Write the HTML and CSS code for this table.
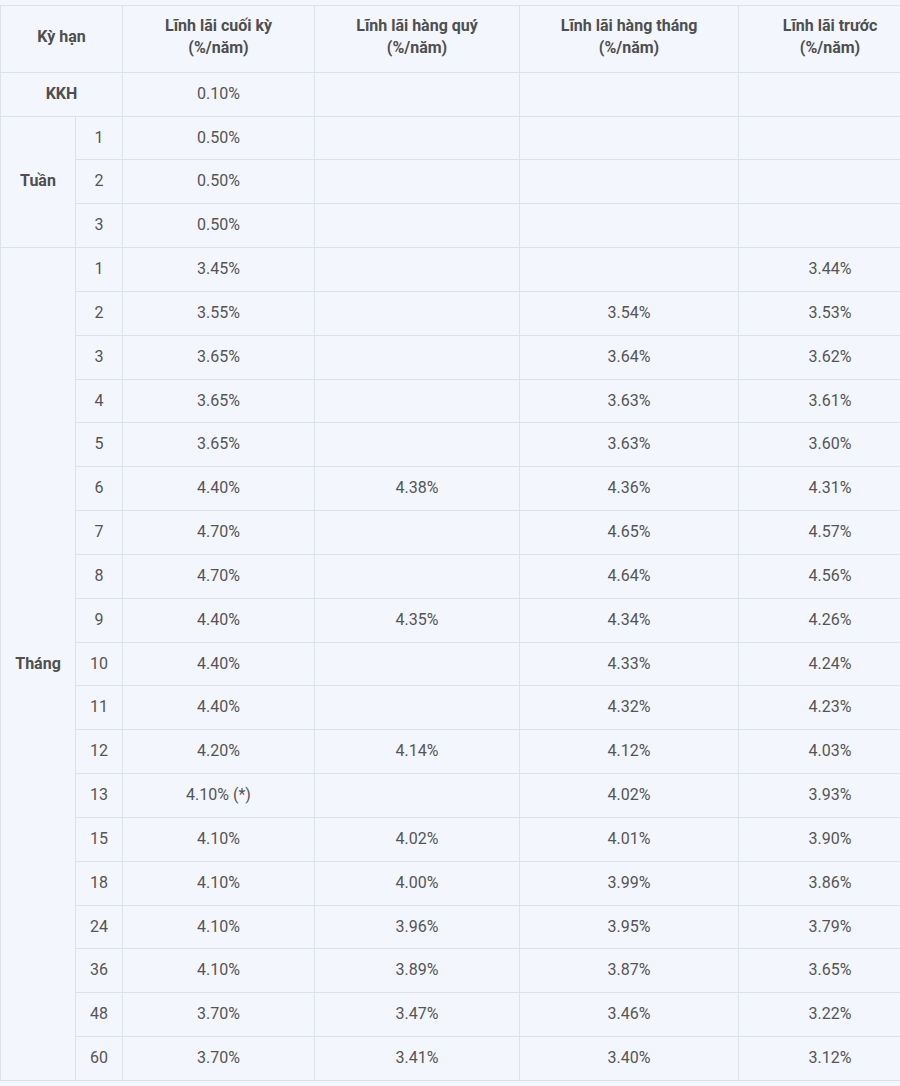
FILE: index.html
```html
<!DOCTYPE html>
<html lang="vi">
<head>
<meta charset="utf-8">
<title>Lãi suất tiền gửi</title>
<link rel="stylesheet" href="styles.css">
</head>
<body>
<div class="wrap">
<table class="rates">
<colgroup>
<col class="c-unit"><col class="c-num"><col class="c-a"><col class="c-b"><col class="c-c"><col class="c-d">
</colgroup>
<thead>
<tr>
<th colspan="2">Kỳ hạn</th>
<th>Lĩnh lãi cuối kỳ<br>(%/năm)</th>
<th>Lĩnh lãi hàng quý<br>(%/năm)</th>
<th>Lĩnh lãi hàng tháng<br>(%/năm)</th>
<th>Lĩnh lãi trước<br>(%/năm)</th>
</tr>
</thead>
<tbody>
<tr><td colspan="2" class="grp">KKH</td><td>0.10%</td><td></td><td></td><td></td></tr>
<tr><td rowspan="3" class="grp">Tuần</td><td>1</td><td>0.50%</td><td></td><td></td><td></td></tr>
<tr><td>2</td><td>0.50%</td><td></td><td></td><td></td></tr>
<tr><td>3</td><td>0.50%</td><td></td><td></td><td></td></tr>
<tr><td rowspan="19" class="grp">Tháng</td><td>1</td><td>3.45%</td><td></td><td></td><td>3.44%</td></tr>
<tr><td>2</td><td>3.55%</td><td></td><td>3.54%</td><td>3.53%</td></tr>
<tr><td>3</td><td>3.65%</td><td></td><td>3.64%</td><td>3.62%</td></tr>
<tr><td>4</td><td>3.65%</td><td></td><td>3.63%</td><td>3.61%</td></tr>
<tr><td>5</td><td>3.65%</td><td></td><td>3.63%</td><td>3.60%</td></tr>
<tr><td>6</td><td>4.40%</td><td>4.38%</td><td>4.36%</td><td>4.31%</td></tr>
<tr><td>7</td><td>4.70%</td><td></td><td>4.65%</td><td>4.57%</td></tr>
<tr><td>8</td><td>4.70%</td><td></td><td>4.64%</td><td>4.56%</td></tr>
<tr><td>9</td><td>4.40%</td><td>4.35%</td><td>4.34%</td><td>4.26%</td></tr>
<tr><td>10</td><td>4.40%</td><td></td><td>4.33%</td><td>4.24%</td></tr>
<tr><td>11</td><td>4.40%</td><td></td><td>4.32%</td><td>4.23%</td></tr>
<tr><td>12</td><td>4.20%</td><td>4.14%</td><td>4.12%</td><td>4.03%</td></tr>
<tr><td>13</td><td>4.10% (*)</td><td></td><td>4.02%</td><td>3.93%</td></tr>
<tr><td>15</td><td>4.10%</td><td>4.02%</td><td>4.01%</td><td>3.90%</td></tr>
<tr><td>18</td><td>4.10%</td><td>4.00%</td><td>3.99%</td><td>3.86%</td></tr>
<tr><td>24</td><td>4.10%</td><td>3.96%</td><td>3.95%</td><td>3.79%</td></tr>
<tr><td>36</td><td>4.10%</td><td>3.89%</td><td>3.87%</td><td>3.65%</td></tr>
<tr><td>48</td><td>3.70%</td><td>3.47%</td><td>3.46%</td><td>3.22%</td></tr>
<tr><td>60</td><td>3.70%</td><td>3.41%</td><td>3.40%</td><td>3.12%</td></tr>
</tbody>
</table>
</div>
</body>
</html>
```
FILE: styles.css
```css
html, body {
  margin: 0;
  padding: 0;
  background: #f3f6fd;
}
body {
  font-family: Roboto, "Liberation Sans", Arial, sans-serif;
  color: #555555;
}
.wrap {
  width: 900px;
  overflow: hidden;
  padding-top: 5px;
}
.rates {
  border-collapse: collapse;
  table-layout: fixed;
  width: 921px;
  background: #f3f6fd;
  font-size: 16px;
}
.c-unit { width: 75px; }
.c-num { width: 47px; }
.c-a { width: 192px; }
.c-b { width: 205px; }
.c-c { width: 219px; }
.c-d { width: 183px; }
.rates th,
.rates td {
  border: 1px solid #dde1ea;
  text-align: center;
  vertical-align: middle;
}
.rates th {
  font-weight: 700;
  color: #4f4f4f;
  line-height: 22.4px;
  padding: 9px 4px 12px;
}
.rates td {
  line-height: 20.83px;
  padding: 11px 4px;
}
.rates td.grp {
  font-weight: 700;
  color: #4f4f4f;
}
```
